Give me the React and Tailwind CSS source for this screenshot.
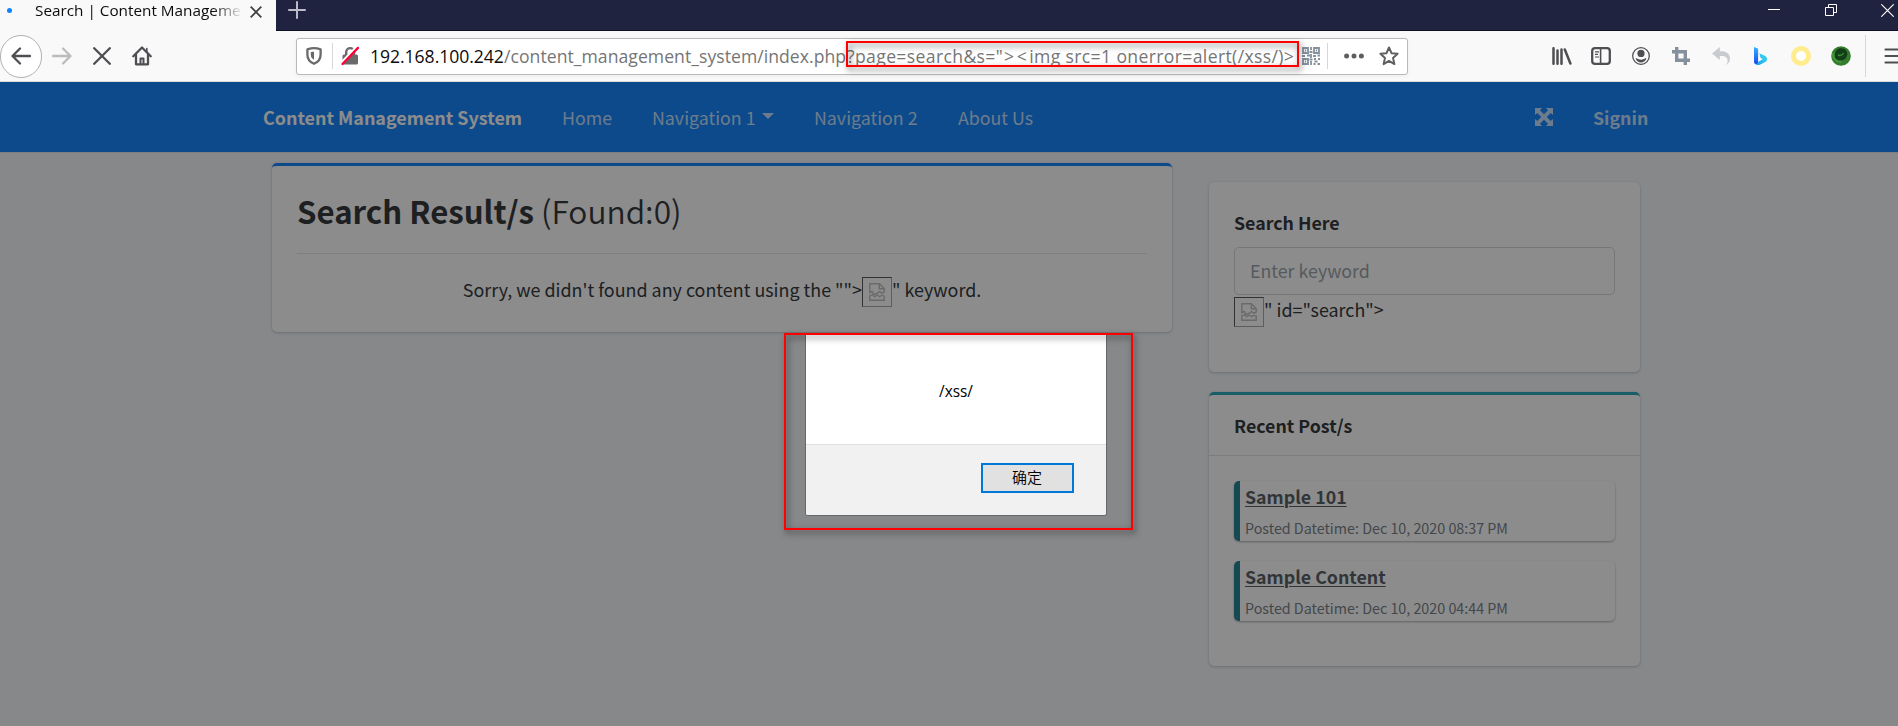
import React from "react";

function BrokenImage({ className = "" }) {
  return (
    <span
      className={`inline-flex h-[30px] w-[30px] shrink-0 items-center justify-center border border-t-[#4a4a4a] border-l-[#4a4a4a] border-r-[#a0a0a0] border-b-[#a0a0a0] ${className}`}
    >
      <svg viewBox="0 0 16 18" className="h-[18px] w-[16px]" fill="none" stroke="#bbb" strokeWidth="1.400">
        <path d="M.8 9.500V.8h9.700l4.700 4.700V9l-2.200 1.200-2.500-1.700-2.500 2-3.200 1L3.200 8.500z" />
        <path d="M10.300 1v4.700H15" />
        <path d="M.8 17.200v-4.500l2.400-1 2.600 2 2.400-1.700 2.400 1.700 2.400-1.500 2.200 1v4z" />
      </svg>
    </span>
  );
}

function TabBar() {
  return (
    <div className="flex h-[31px] shrink-0 border-b border-[#0f0f24] bg-[#202340] font-['Open_Sans',sans-serif]">
      <div className="flex h-[31px] w-[276px] shrink-0 bg-[#f9f9fa]">
        <span className="mt-2 ml-[7px] h-[5px] w-[5px] rounded-full bg-[#0a84ff]" />
        <span className="ml-[23px] h-[22px] w-[208px] text-[15.3px] leading-[21px] whitespace-nowrap text-[#0c0c0d] [mask-image:linear-gradient(to_right,black_178px,transparent_208px)]">
          Search | Content Manageme
        </span>
        <svg viewBox="0 0 12 12" className="mt-[6px] ml-[7px] h-[12px] w-[12px]" stroke="#3e3e42" strokeWidth="1.700">
          <path d="M.7.7l10.600 10.600M11.300.7L.7 11.300" />
        </svg>
      </div>
      <svg viewBox="0 0 18 18" className="mt-[1px] ml-[12px] h-[18px] w-[18px]" stroke="#bcbcc8" strokeWidth="2" strokeLinecap="round">
        <path d="M9 1v16M1 9h16" />
      </svg>
      <div className="ml-auto flex pt-[4px] pr-[4px]">
        <svg viewBox="0 0 12 12" className="h-[12px] w-[12px]" stroke="#fff">
          <path d="M0 5.500h12" />
        </svg>
        <svg viewBox="0 0 12 12" className="ml-[45px] h-[12px] w-[12px]" fill="none" stroke="#fff">
          <path d="M.5 3.500h8v8h-8zM3.500 3.500v-3h8v8h-3" />
        </svg>
        <svg viewBox="0 0 13 13" className="ml-[44px] h-[13px] w-[13px]" stroke="#fff" strokeWidth="1.100">
          <path d="M.3.3l12.400 12.400M12.700.3L.3 12.700" />
        </svg>
      </div>
    </div>
  );
}

function QrIcon() {
  return (
    <svg viewBox="0 0 18 18" className="h-[18px] w-[18px]" fill="none" stroke="#84909c" strokeWidth="1.800">
      <path d="M1 1h5v5H1zM12 1h5v5h-5zM1 12h5v5H1z" />
      <path d="M2.800 3.500h1.400M13.800 3.500h1.400M2.800 14.500h1.400M9 0v3M7.500 5h3M0 9h3M5 8.500h3M9 7v4M11 9h3M15.500 8.500H18M7.500 12.500h3M9 14v4M12 12h2M16 12h2M12.500 14.500h3M11.500 17h2M15.500 17H18" />
    </svg>
  );
}

function UrlBar() {
  return (
    <div className="ml-[144px] flex h-[37px] w-[1112px] shrink-0 items-center rounded-[3px] border border-[#b9b9ba] bg-white shadow-[0_1px_4px_rgba(0,0,0,0.06)]">
      <svg viewBox="0 0 16 18" className="ml-[9px] h-[18px] w-[16px]">
        <path d="M8 1.200c2.500 0 4.600.5 6.600 1.100v5.500c0 4.800-2.600 7.400-6.600 9-4-1.600-6.600-4.200-6.600-9V2.300C3.400 1.700 5.500 1.200 8 1.200z" fill="none" stroke="#6a6a6c" strokeWidth="2.300" strokeLinejoin="round" />
        <path d="M8 4.800v8c-2.200-1.200-3.200-2.700-3.200-5V5.200C5.800 4.900 6.800 4.800 8 4.800z" fill="#6a6a6c" />
      </svg>
      <span className="ml-[10px] h-[26px] w-px bg-[#d7d7db]" />
      <svg viewBox="0 0 18 20" className="ml-[8px] h-[20px] w-[18px]">
        <path d="M5.200 9V6a3.900 3.900 0 0 1 7.800 0v3" fill="none" stroke="#6a6a6c" strokeWidth="2.400" />
        <rect x="1.500" y="8.500" width="15.500" height="10" rx="1.500" fill="#6a6a6c" />
        <path d="M.2 17.200L15.800 1" stroke="#fff" strokeWidth="3" />
        <path d="M1.500 18L17 1.900" stroke="#ff0039" strokeWidth="2.300" strokeLinecap="round" />
      </svg>
      <div className="ml-[11px] flex w-[932px] font-['Open_Sans',sans-serif] text-[17.6px] leading-[26px] whitespace-nowrap text-[#757576]">
        <span className="w-[134px] shrink-0 tracking-[-0.05px] text-[#0c0c0d]">192.168.100.242</span>
        <span className="w-[343px] shrink-0 tracking-[0.04px]">/content_management_system/index.php</span>
        <span className="tracking-[0.36px]">
          ?page=search&amp;s="<span className="ml-[1px] tracking-[2.5px]">&gt;&lt;</span>img src=1 onerror=alert(/xss/)&gt;
        </span>
      </div>
      <QrIcon />
      <span className="ml-[7px] h-[26px] w-px bg-[#d7d7db]" />
      <svg viewBox="0 0 20 6" className="ml-[16px] h-[6px] w-[20px]" fill="#5f5f61">
        <circle cx="2.600" cy="3" r="2.500" />
        <circle cx="10" cy="3" r="2.500" />
        <circle cx="17.400" cy="3" r="2.500" />
      </svg>
      <svg viewBox="0 0 20 20" className="ml-[15px] h-[20px] w-[20px]" fill="none" stroke="#5f5f61" strokeWidth="2" strokeLinejoin="round">
        <path d="M10 1.500l2.500 5.700 6.100.6-4.600 4.100 1.400 6.200L10 14.900l-5.400 3.200L6 11.900 1.400 7.800l6.100-.6z" />
      </svg>
    </div>
  );
}

function ToolbarIcons() {
  return (
    <div className="ml-auto flex h-full shrink-0 items-center">
      <svg viewBox="0 0 20 18" className="h-[18px] w-[20px]" fill="none" stroke="#4f4f53" strokeWidth="2.500" strokeLinecap="round">
        <path d="M1.500 1.200v15.600M5.500 3.500v13.300M9.500 2.500v14.300M12.800 2.500l5.600 14" />
      </svg>
      <svg viewBox="0 0 20 18" className="ml-[19px] h-[18px] w-[20px]" fill="none" stroke="#4f4f53">
        <rect x="1.200" y="1.200" width="17.600" height="15.600" rx="2.800" strokeWidth="2.300" />
        <path d="M9.600 2v14" strokeWidth="1.600" />
        <path d="M4 4.800h4M4 7.400h3M4 10h4" strokeWidth="1.200" />
      </svg>
      <svg viewBox="0 0 18 18" className="ml-[21px] h-[18px] w-[18px]">
        <circle cx="9" cy="9" r="8.300" fill="none" stroke="#4f4f53" strokeWidth="1.300" />
        <circle cx="9" cy="6.400" r="3.600" fill="#4f4f53" />
        <path d="M3.600 11.200c1.400-.2 1.800.6 2.400.9 1.900 1 4.100 1 6 0 .6-.3 1-1.100 2.400-.9-.5 2.400-2.800 4.200-5.400 4.200s-4.900-1.800-5.400-4.200z" fill="#4f4f53" />
      </svg>
      <svg viewBox="0 0 18 18" className="ml-[22px] h-[18px] w-[18px]" fill="none" stroke="#84909c" strokeWidth="3.400">
        <path d="M4.700 0v13.300H18M0 4.700h13.300V18" />
      </svg>
      <svg viewBox="0 0 18 18" className="ml-[22px] h-[18px] w-[18px]" fill="#c8ccd1">
        <path d="M0 6.500L7.800 0v4.200h1.700c5 0 8.500 2.700 8.500 7.300 0 3-1.600 5.500-4.600 6.500 1.700-1.200 2.200-2.600 2.200-4.200 0-2.900-2-4.800-6-4.800H7.800v4z" />
      </svg>
      <svg viewBox="0 0 13 18" className="ml-[24px] h-[18px] w-[13px]">
        <defs>
          <linearGradient id="bingStem" x1="0" y1="0" x2="0" y2="1">
            <stop offset="0" stopColor="#2fb4ff" />
            <stop offset="1" stopColor="#1b48ef" />
          </linearGradient>
          <linearGradient id="bingBowl" x1="0" y1="1" x2="1" y2="0">
            <stop offset="0" stopColor="#1f9bf0" />
            <stop offset="1" stopColor="#37e0f0" />
          </linearGradient>
        </defs>
        <path d="M5.300 6.200l5 2.300c2 .9 2.700 2 2.700 3.700 0 .8-.3 1.700-.9 2.400l-5.700 3c-1.500.8-3.700.5-4.900-.4-1.200-1-1.500-1.900-1.500-3.200l4 1 5-3-2.400-1z" fill="url(#bingBowl)" />
        <path d="M0 0l3.200 1.200c.6.2.9.8.9 1.400V15c0 1.300-1 2-2 2-1.300 0-2.100-1-2.100-2.200z" fill="url(#bingStem)" />
      </svg>
      <svg viewBox="0 0 20 20" className="ml-[24px] h-[20px] w-[20px]">
        <circle cx="10" cy="10" r="7.500" fill="#fff" stroke="#ffec8c" strokeWidth="5" />
      </svg>
      <svg viewBox="0 0 20 20" className="ml-[20px] h-[20px] w-[20px]">
        <circle cx="10" cy="10" r="9.800" fill="#357c2d" />
        <path d="M4 7.500c.5-4.500 5-6.500 9-4.700 4 1.900 4.200 7 1.500 9.700-3 3-8.700 2.100-10.500-1z" fill="#123f17" />
        <path d="M7 9c2.500 1 4.500 0 5.500-2" fill="none" stroke="#3d8a35" strokeWidth="1.400" />
        <path d="M1.800 7c-.5 5.500 3.700 9.500 8.500 9.300" fill="none" stroke="#4b9a40" strokeWidth="1.500" />
      </svg>
      <span className="ml-[14px] h-[42px] w-px bg-[#d7d7db]" />
      <svg viewBox="0 0 14 16" className="ml-[18px] h-[16px] w-[14px]" stroke="#4f4f53" strokeWidth="2.200" strokeLinecap="round">
        <path d="M1.500 1.500H16M1.500 8H16M1.500 14.500H16" />
      </svg>
    </div>
  );
}

function Toolbar() {
  return (
    <div className="flex h-[51px] shrink-0 items-center border-b border-[#dcdcdf] bg-[#f9f9fa]">
      <span className="flex h-[43px] w-[42px] shrink-0 items-center justify-center rounded-full border border-[#b1b1b3] bg-white">
        <svg viewBox="0 0 20 18" className="h-[18px] w-[20px]" fill="none" stroke="#4f4f53" strokeWidth="2.300" strokeLinecap="round" strokeLinejoin="round">
          <path d="M9 1.500L1.500 9 9 16.500M2 9h17" />
        </svg>
      </span>
      <svg viewBox="0 0 20 18" className="ml-[10px] h-[18px] w-[20px]" fill="none" stroke="#bcbcbe" strokeWidth="2.300" strokeLinecap="round" strokeLinejoin="round">
        <path d="M11 1.500L18.500 9 11 16.500M18 9H1" />
      </svg>
      <svg viewBox="0 0 18 18" className="ml-[21px] h-[18px] w-[18px]" stroke="#4f4f53" strokeWidth="2.300" strokeLinecap="round">
        <path d="M1.200 1.200l15.600 15.600M16.800 1.200L1.200 16.800" />
      </svg>
      <svg viewBox="0 0 20 20" className="ml-[21px] h-[20px] w-[20px]" fill="none" stroke="#4f4f53" strokeWidth="2.300" strokeLinecap="round" strokeLinejoin="round">
        <path d="M1.300 10.200L10 1.500l8.700 8.700" />
        <path d="M4 9v9.300h12V9" />
        <path d="M8.500 18v-5.500h3V18" strokeWidth="2" />
        <path d="M14.800 6V2.500" strokeWidth="1.600" />
      </svg>
      <UrlBar />
      <ToolbarIcons />
    </div>
  );
}

function SiteNav() {
  return (
    <nav className="flex h-[71px] shrink-0 items-center border-b border-[#dee2e6] bg-[#007bff] pl-[263px] whitespace-nowrap text-white/75">
      <span className="w-[259px] text-[17.9px] font-bold text-white">Content Management System</span>
      <span className="ml-[40px] w-[50px]">Home</span>
      <span className="ml-[40px] w-[104px]">Navigation 1</span>
      <span className="mb-[3px] ml-[6px] border-x-[6px] border-t-[6px] border-x-transparent" />
      <span className="ml-[40px] w-[104px]">Navigation 2</span>
      <span className="ml-[40px]">About Us</span>
      <svg viewBox="0 0 18 18" className="mr-[40px] mb-px ml-auto h-[18px] w-[18px]" fill="currentColor">
        <path d="M0 0h7L5 2.300l4 4 4-4L11 0h7v7l-2.300-2-4 4 4 4L18 11v7h-7l2-2.300-4-4-4 4L7 18H0v-7l2.300 2 4-4-4-4L0 7z" />
      </svg>
      <span className="mr-[249px] w-[56px] font-bold">Signin</span>
    </nav>
  );
}

const cardShadow = "shadow-[0_0_1px_rgba(0,0,0,0.125),0_1px_3px_rgba(0,0,0,0.2)]";

function SearchResult() {
  return (
    <section className={`mt-[10px] h-[169px] w-[900px] rounded-[5px] border-t-[3px] border-[#007bff] bg-white px-[25px] ${cardShadow}`}>
      <h1 className="flex h-[88px] items-baseline border-b border-black/10 pt-[20px] text-[31.2px] leading-[48px]">
        <b className="w-[244px]">Search Result/s</b>
        <span className="text-[31.7px] font-[350]">(Found:0)</span>
      </h1>
      <p className="mt-[22px] flex h-[30px] items-center justify-center text-[17.9px]">
        <span className="-mt-[4px]">Sorry, we didn't found any content using the ""&gt;</span>
        <BrokenImage className="mt-[2px]" />
        <span className="-mt-[4px]">" keyword.</span>
      </p>
    </section>
  );
}

function SearchCard() {
  return (
    <section className={`h-[190px] w-[431px] rounded-[5px] bg-white px-[25px] pt-[25px] ${cardShadow}`}>
      <h2 className="h-[40px] leading-[30px] font-bold">Search Here</h2>
      <div className="flex h-[48px] items-center rounded-[5px] border border-[#ced4da] px-[15px] pb-[2px] text-[#939ba2]">
        Enter keyword
      </div>
      <p className="mt-[2px] flex h-[30px] items-center text-[17.9px]">
        <BrokenImage />
        <span className="-mt-[7px]">" id="search"&gt;</span>
      </p>
    </section>
  );
}

const posts = [
  { title: "Sample 101", date: "Dec 10, 2020 08:37 PM" },
  { title: "Sample Content", date: "Dec 10, 2020 04:44 PM" },
];

function RecentPosts() {
  return (
    <section className={`mt-[20px] h-[274px] w-[431px] rounded-[5px] border-t-[3px] border-[#17a2b8] bg-white ${cardShadow}`}>
      <h2 className="flex h-[61px] items-center border-b border-black/[0.125] px-[25px] pb-px font-bold">Recent Post/s</h2>
      <div className="flex flex-col gap-[20px] px-[25px] pt-[25px]">
        {posts.map((post) => (
          <article
            key={post.title}
            className="h-[60px] rounded-[5px] border-l-[6px] border-[#117a8b] bg-white pl-[5px] shadow-[0_1px_3px_rgba(0,0,0,0.12),0_1px_2px_rgba(0,0,0,0.24)]"
          >
            <h3 className="h-[34px] leading-[30px] font-bold text-[#495057] underline decoration-[1px] underline-offset-[2px]">
              {post.title}
            </h3>
            <p className="text-[14.3px] leading-[26px] text-[#6c757d]">Posted Datetime: {post.date}</p>
          </article>
        ))}
      </div>
    </section>
  );
}

function AlertDialog() {
  return (
    <div className="absolute top-[335px] left-[805px] h-[181px] w-[302px] rounded-b-[3px] border border-t-0 border-[#666768] bg-white font-['Open_Sans','Noto_Sans_CJK_SC',sans-serif] text-black">
      <div className="flex h-[109px] items-end justify-center pb-[40px] text-[15.4px] leading-[24px]">/xss/</div>
      <div className="flex h-[71px] justify-end rounded-b-[2px] border-t border-[#dfdfdf] bg-[#f1f1f1] pt-[18px] pr-[32px]">
        <div className="flex h-[30px] w-[93px] items-center justify-center border-2 border-[#0078d7] bg-[#e1e1e1] pr-px pb-[3px] font-['Noto_Sans_CJK_SC',sans-serif] text-[15px] leading-none font-[350]">
          确定
        </div>
      </div>
    </div>
  );
}

export default function App() {
  return (
    <div className="relative flex h-[726px] w-[1898px] flex-col overflow-hidden bg-[#f4f6f9]">
      <TabBar />
      <Toolbar />
      <div className="relative flex flex-1 flex-col font-['Noto_Sans_CJK_SC',sans-serif] text-[17.8px] leading-[30px] text-[#212529]">
        <SiteNav />
        <main className="flex items-start gap-[37px] pl-[272px]">
          <SearchResult />
          <aside className="pt-[29px]">
            <SearchCard />
            <RecentPosts />
          </aside>
        </main>
        <div className="absolute inset-0 bg-[#1a1a1a]/50" />
      </div>
      <AlertDialog />
      <div className="absolute top-[41px] left-[846px] h-[26px] w-[453px] border-2 border-[#fe0000] drop-shadow-[2px_3px_3px_rgba(0,0,0,0.6)]" />
      <div className="absolute top-[333px] left-[784px] h-[197px] w-[349px] border-2 border-[#fe0000] drop-shadow-[2px_3px_3px_rgba(0,0,0,0.6)]" />
    </div>
  );
}
